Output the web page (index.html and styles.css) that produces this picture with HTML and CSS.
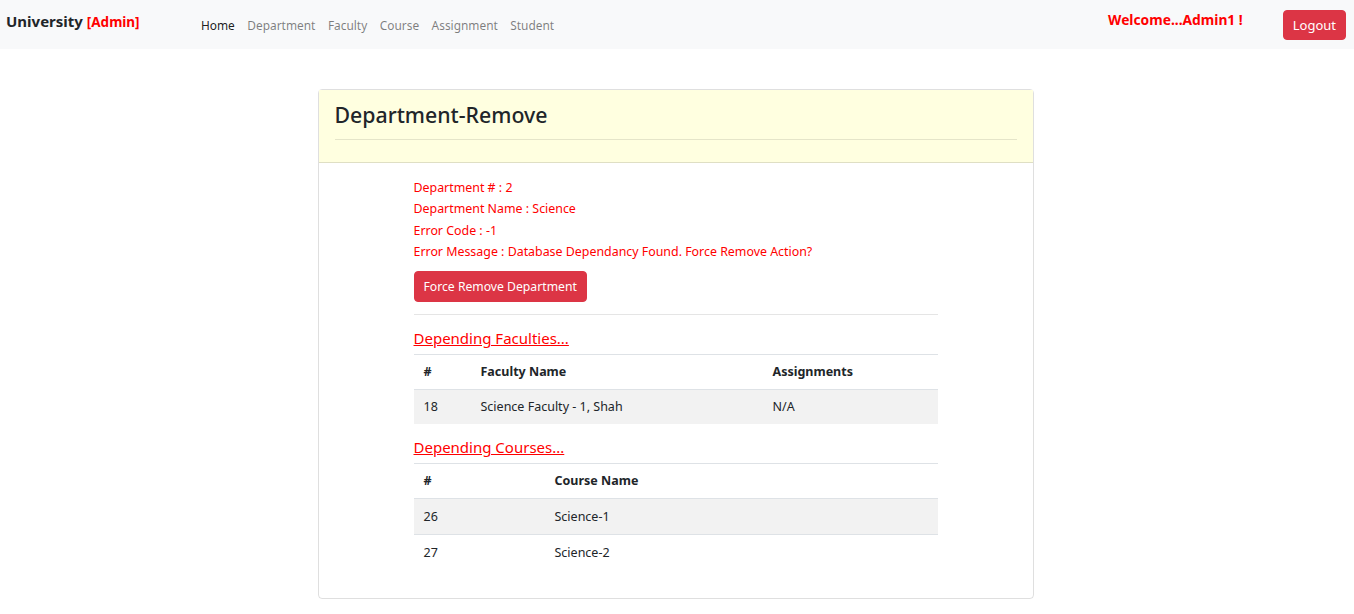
FILE: index.html
```html
<!DOCTYPE html>
<html lang="en">
<head>
<meta charset="utf-8">
<title>Department-Remove</title>
<link rel="stylesheet" href="styles.css">
</head>
<body>
<nav class="navbar">
  <div class="brand">University <span class="brand-tag">[Admin]</span></div>
  <ul class="nav-links">
    <li class="active">Home</li>
    <li>Department</li>
    <li>Faculty</li>
    <li>Course</li>
    <li>Assignment</li>
    <li>Student</li>
  </ul>
  <div class="welcome">Welcome...Admin1 !</div>
  <button class="btn btn-danger logout">Logout</button>
</nav>

<main class="container">
  <section class="card">
    <header class="card-header">
      <h4 class="card-title">Department-Remove</h4>
      <hr class="header-rule">
    </header>
    <div class="card-body">
      <div class="content">
        <p class="err">Department # : 2</p>
        <p class="err">Department Name : Science</p>
        <p class="err">Error Code : -1</p>
        <p class="err">Error Message : Database Dependancy Found. Force Remove Action?</p>
        <button class="btn btn-danger force">Force Remove Department</button>
        <hr class="body-rule">
        <a class="section-link" href="#">Depending Faculties...</a>
        <table class="table fac">
          <thead>
            <tr><th class="c1">#</th><th class="c2">Faculty Name</th><th>Assignments</th></tr>
          </thead>
          <tbody>
            <tr class="striped"><td>18</td><td>Science Faculty - 1, Shah</td><td>N/A</td></tr>
          </tbody>
        </table>
        <a class="section-link" href="#">Depending Courses...</a>
        <table class="table crs">
          <thead>
            <tr><th class="c1">#</th><th>Course Name</th></tr>
          </thead>
          <tbody>
            <tr class="striped"><td>26</td><td>Science-1</td></tr>
            <tr><td>27</td><td>Science-2</td></tr>
          </tbody>
        </table>
      </div>
    </div>
  </section>
</main>
</body>
</html>
```

FILE: styles.css
```css
* { box-sizing: border-box; }
html, body { margin: 0; padding: 0; }
body {
  font-family: "Noto Sans", "Open Sans", "Liberation Sans", sans-serif;
  color: #212529;
  background: #fff;
  font-size: 13px;
}

.navbar {
  height: 49px;
  background: #f8f9fa;
  display: flex;
  align-items: center;
  padding: 0 8px 0 6px;
}
.brand {
  font-weight: 700;
  font-size: 15px;
  color: #212529;
  width: 195px;
  margin-top: -8px;
}
.brand-tag { color: #ff0000; font-size: 13.5px; }
.nav-links {
  list-style: none;
  margin: 0;
  padding: 0;
  display: flex;
  gap: 12.5px;
  flex: 1;
}
.nav-links li { color: rgba(0,0,0,.5); font-size: 11.9px; }
.nav-links li.active { color: rgba(0,0,0,.9); }
.welcome {
  color: #ff0000;
  font-weight: 700;
  font-size: 13.8px;
  margin-right: 40px;
  margin-top: -10px;
}
.btn {
  font-family: inherit;
  border: 1px solid transparent;
  border-radius: 4px;
  cursor: pointer;
}
.btn-danger { background: #dc3545; border-color: #dc3545; color: #fff; }
.logout { height: 30px; padding: 0 9px; font-size: 13px; margin-top: 0; }

.container {
  display: flex;
  justify-content: center;
  padding-top: 40px;
  padding-left: 0;
}
.card {
  width: 716px;
  border: 1px solid rgba(0,0,0,.125);
  border-radius: 4px;
  margin-left: -3px;
}
.card-header {
  background: #ffffe0;
  border-bottom: 1px solid rgba(0,0,0,.125);
  padding: 10px 16px 0 16px;
  height: 73px;
}
.card-title {
  margin: 0;
  font-size: 21.3px;
  font-weight: 500;
  line-height: 30px;
}
.header-rule {
  border: 0;
  border-top: 1px solid rgba(0,0,0,.1);
  margin: 9px 0 0 0;
}
.card-body { padding: 14px 16px 28px 95px; }
.content { width: 524px; }
.err {
  color: #ff0000;
  margin: 0;
  line-height: 21.3px;
  font-size: 12.4px;
}
.force {
  margin-top: 9px;
  height: 31px;
  padding: 0 9px;
  font-size: 12.2px;
}
.body-rule {
  border: 0;
  border-top: 1px solid rgba(0,0,0,.1);
  margin: 12px 0 0 0;
}
.section-link {
  display: block;
  color: #ff0000;
  font-size: 15px;
  line-height: 20px;
  margin: 13px 0 6px 0;
  text-decoration: underline;
}
.table {
  width: 100%;
  border-collapse: collapse;
  font-size: 12.5px;
}
.table th, .table td {
  text-align: left;
  padding: 8px 10px;
  line-height: 18px;
  border-top: 1px solid #dee2e6;
}
.crs td { line-height: 19px; }
.table thead th { border-bottom: 1px solid #dee2e6; font-weight: 700; }
.fac .c1 { width: 57px; }
.fac .c2 { width: 292px; }
.crs .c1 { width: 131px; }
.striped td { background: #f2f2f2; }
.fac + .section-link { margin-top: 13px; }
```
